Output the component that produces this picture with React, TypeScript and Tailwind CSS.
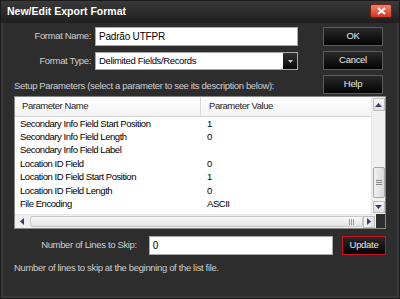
import React from "react";

const font = { fontFamily: "'Liberation Sans',Arial,sans-serif" };

const rows: [string, string][] = [
  ["Secondary Info Field Start Position", "1"],
  ["Secondary Info Field Length", "0"],
  ["Secondary Info Field Label", ""],
  ["Location ID Field", "0"],
  ["Location ID Field Start Position", "1"],
  ["Location ID Field Length", "0"],
  ["File Encoding", "ASCII"],
];

function Btn({ children, red }: { children: React.ReactNode; red?: boolean }) {
  return (
    <div
      className={`flex items-center justify-center text-[9.5px] tracking-[-0.3px] text-[#e8e8e8] bg-gradient-to-b from-[#2a2a2a] to-[#050505] border ${
        red ? "border-[#c8101a] w-[44px] h-[19px]" : "border-[#5c5c5c] w-[60px] h-[19px]"
      }`}
    >
      {children}
    </div>
  );
}

export default function App() {
  return (
    <div
      className="w-[400px] h-[299px] bg-[#2d2d2d] flex flex-col border border-[#1a1a1a] overflow-hidden"
      style={font}
    >
      {/* title bar */}
      <div className="h-[22px] flex items-center justify-between pl-[6px] pr-[7px] bg-gradient-to-b from-[#3a3a3a] to-[#1f1f1f]">
        <span className="text-[10.5px] font-bold text-white">New/Edit Export Format</span>
        <div className="w-[22px] h-[14px] mt-[-3px] rounded-[2px] bg-gradient-to-b from-[#f08070] to-[#d8301c] border border-[#7a2010] flex items-center justify-center">
          <svg width="9" height="8" viewBox="0 0 9 8">
            <path d="M1 1 L8 7 M8 1 L1 7" stroke="#fff" strokeWidth="2" />
          </svg>
        </div>
      </div>

      <div className="flex-1 flex flex-col px-[11px] border-l-[2px] border-r-[2px] border-b-[2px] border-[#3a3a3a] text-[9.5px] tracking-[-0.35px]">
        {/* top */}
        <div className="flex mt-[4px]">
          <div className="flex flex-col gap-[6px] w-[285px]">
            <div className="flex items-center h-[19px]">
              <span className="w-[79px] text-right pr-[2px] text-[#d0d0d0]">Format Name:</span>
              <div className="ml-[2px] w-[203px] h-[19px] bg-white border border-[#a8a8a8] flex items-center pl-[3px] text-[10px] tracking-[-0.2px] text-black">
                Padrão UTFPR
              </div>
            </div>
            <div className="flex items-center h-[18px]">
              <span className="w-[79px] text-right pr-[2px] text-[#d0d0d0]">Format Type:</span>
              <div className="ml-[2px] w-[203px] h-[18px] bg-white border border-[#a8a8a8] flex items-center text-black">
                <span className="flex-1 pl-[3px]">Delimited Fields/Records</span>
                <div className="w-[14px] h-[16px] bg-gradient-to-b from-[#333] to-[#0a0a0a] flex items-center justify-center">
                  <svg width="5" height="3" viewBox="0 0 5 3">
                    <path d="M0 0 H5 L2.5 3 Z" fill="#ccc" />
                  </svg>
                </div>
              </div>
            </div>
          </div>
          <div className="ml-[24px] flex flex-col gap-[5px]">
            <Btn>OK</Btn>
            <Btn>Cancel</Btn>
            <Btn>Help</Btn>
          </div>
        </div>

        <div className="mt-[-14px] text-[#cfcfcf] leading-[12px]">
          Setup Parameters (select a parameter to see its description below):
        </div>

        {/* table */}
        <div className="mt-[4px] h-[133px] border border-[#888] bg-white flex flex-col tracking-[-0.45px]">
          <div className="flex-1 flex min-h-0">
            <div className="flex-1 flex flex-col min-w-0">
              <div className="h-[20px] shrink-0 flex text-[#1e1e1e] bg-gradient-to-b from-white to-[#f3f3f3] border-b border-[#d5d5d5]">
                <div className="w-[186px] pl-[7px] flex items-center border-r border-[#d8d8d8]">Parameter Name</div>
                <div className="pl-[8px] flex items-center">Parameter Value</div>
              </div>
              <div className="flex flex-col text-black">
                {rows.map(([n, v]) => (
                  <div key={n} className="h-[13.4px] shrink-0 flex items-center">
                    <span className="w-[186px] pl-[5px]">{n}</span>
                    <span className="pl-[6px]">{v}</span>
                  </div>
                ))}
              </div>
            </div>
            {/* vertical scrollbar */}
            <div className="w-[14px] flex flex-col bg-[#f0f0f0] border-l border-[#e6e6e6] py-[1px] items-center">
              <div className="w-[12px] h-[13px] border border-[#bdbdbd] bg-gradient-to-b from-[#f6f6f6] to-[#dedede] flex items-center justify-center">
                <svg width="7" height="4" viewBox="0 0 7 4"><path d="M0 4 L3.5 0 L7 4Z" fill="#3c3c6a" /></svg>
              </div>
              <div className="flex-1 w-full flex flex-col items-center justify-end pb-[3px]">
                <div className="w-[12px] h-[31px] border border-[#a6a6a6] rounded-[2px] bg-gradient-to-r from-[#f2f2f2] to-[#d8d8d8] flex items-center justify-center">
                  <svg width="6" height="5" viewBox="0 0 6 5"><path d="M0 .5H6M0 2.5H6M0 4.5H6" stroke="#888" strokeWidth="1" /></svg>
                </div>
              </div>
              <div className="w-[12px] h-[12px] border border-[#bdbdbd] bg-gradient-to-b from-[#f6f6f6] to-[#dedede] flex items-center justify-center">
                <svg width="7" height="4" viewBox="0 0 7 4"><path d="M0 0 L7 0 L3.5 4Z" fill="#3c3c6a" /></svg>
              </div>
            </div>
          </div>
          {/* horizontal scrollbar */}
          <div className="h-[14px] flex bg-[#f0f0f0]">
            <div className="flex-1 flex items-center px-[1px] border-t border-[#e6e6e6]">
              <div className="w-[12px] h-[12px] flex items-center justify-center">
                <svg width="4" height="7" viewBox="0 0 4 7"><path d="M4 0 L0 3.5 L4 7Z" fill="#3c3c6a" /></svg>
              </div>
              <div className="ml-[2px] w-[333px] h-[11px] border border-[#c8c8c8] rounded-[2px] bg-gradient-to-b from-[#f8f8f8] to-[#e4e4e4] flex items-center justify-end pr-[8px]">
                <svg width="5" height="6" viewBox="0 0 5 6"><path d="M.5 0V6M2.5 0V6M4.5 0V6" stroke="#999" strokeWidth="1" /></svg>
              </div>
              <div className="flex-1" />
              <div className="w-[12px] h-[12px] border border-[#bdbdbd] bg-gradient-to-r from-[#f6f6f6] to-[#dedede] flex items-center justify-center">
                <svg width="4" height="7" viewBox="0 0 4 7"><path d="M0 0 L4 3.5 L0 7Z" fill="#3c3c6a" /></svg>
              </div>
            </div>
            <div className="w-[14px] bg-[#2d2d2d]" />
          </div>
        </div>

        {/* bottom */}
        <div className="mt-[7px] flex items-center h-[19px]">
          <span className="w-[124px] text-right text-[#d0d0d0]">Number of Lines to Skip:</span>
          <div className="ml-[12px] w-[186px] h-[19px] bg-white border border-[#a8a8a8] flex items-center pl-[3px] text-[10px] text-black">
            0
          </div>
          <div className="ml-[9px]">
            <Btn red>Update</Btn>
          </div>
        </div>
        <div className="mt-[6px] text-[#cfcfcf]">
          Number of lines to skip at the beginning of the list file.
        </div>
      </div>
    </div>
  );
}
